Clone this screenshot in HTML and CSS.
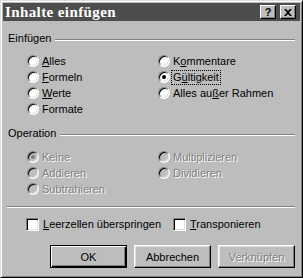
FILE: index.html
```
<!DOCTYPE html>
<html lang="de">
<head>
    <meta charset="UTF-8">
    <title>Inhalte einfügen</title>
    <link rel="stylesheet" href="styles.css">
</head>
<body>
    <div class="dialog">
        <div class="titlebar">
            <span class="title">Inhalte einfügen</span>
            <div class="caption-buttons">
                <span class="cap-btn help">?</span>
                <span class="cap-btn close">
                    <svg width="8" height="7" viewBox="0 0 8 7"><path d="M0 0h2l2 2 2-2h2L5 3.5 8 7H6L4 5 2 7H0l3-3.5z" fill="#000"/></svg>
                </span>
            </div>
        </div>

        <div class="content">
            <!-- Einfügen -->
            <div class="group-head"><span>Einfügen</span><div class="rule"></div></div>
            <div class="options">
                <label class="opt"><span class="radio"></span><span><u>A</u>lles</span></label>
                <label class="opt"><span class="radio"></span><span>K<u>o</u>mmentare</span></label>
                <label class="opt"><span class="radio"></span><span><u>F</u>ormeln</span></label>
                <label class="opt"><span class="radio checked"></span><span class="focus">G<u>ü</u>ltigkeit</span></label>
                <label class="opt"><span class="radio"></span><span><u>W</u>erte</span></label>
                <label class="opt"><span class="radio"></span><span>Alles au<u>ß</u>er Rahmen</span></label>
                <label class="opt"><span class="radio"></span><span>Formate</span></label>
            </div>

            <!-- Operation -->
            <div class="group-head op-head"><span>Operation</span><div class="rule"></div></div>
            <div class="options disabled">
                <label class="opt"><span class="radio checked"></span><span>Keine</span></label>
                <label class="opt"><span class="radio"></span><span>Multiplizieren</span></label>
                <label class="opt"><span class="radio"></span><span>Addieren</span></label>
                <label class="opt"><span class="radio"></span><span>Dividieren</span></label>
                <label class="opt"><span class="radio"></span><span>Subtrahieren</span></label>
            </div>

            <div class="separator"></div>

            <div class="checks">
                <label class="chk leer"><span class="box"></span><span><u>L</u>eerzellen überspringen</span></label>
                <label class="chk"><span class="box"></span><span><u>T</u>ransponieren</span></label>
            </div>

            <div class="buttons">
                <button class="btn default">OK</button>
                <button class="btn">Abbrechen</button>
                <button class="btn disabled-btn">Verknüpfen</button>
            </div>
        </div>
    </div>
</body>
</html>
```

FILE: styles.css
```
body {
    margin: 0;
    padding: 0;
    background: #bdbdbd;
    font-family: "Liberation Sans", Arial, sans-serif;
    font-size: 11px;
    line-height: 13px;
    color: #000;
}
.dialog {
    width: 303px;
    height: 278px;
    box-sizing: border-box;
    padding: 1px;
    background: #bdbdbd;
    border: 1px solid;
    border-color: #dfdfdf #000 #000 #dfdfdf;
    box-shadow: inset 1px 1px #fff, inset -1px -1px #808080;
}
.titlebar {
    height: 18px;
    margin: 1px 0 0 1px;
    width: 297px;
    background: #4d4d4d;
    display: flex;
    align-items: center;
    justify-content: space-between;
}
.title {
    font-family: "Liberation Serif", "Times New Roman", serif;
    font-weight: bold;
    font-size: 15px;
    color: #fff;
    padding-left: 2px;
    letter-spacing: 0.4px;
}
.caption-buttons {
    display: flex;
    gap: 4px;
    padding-right: 4px;
}
.cap-btn {
    width: 16px;
    height: 14px;
    box-sizing: border-box;
    background: #bdbdbd;
    border: 1px solid;
    border-color: #fff #000 #000 #fff;
    box-shadow: inset -1px -1px #808080;
    display: flex;
    align-items: center;
    justify-content: center;
}
.help {
    font-weight: bold;
    font-size: 11px;
    line-height: 12px;
}
.content {
    padding: 0 6px 0 6px;
}
.group-head {
    display: flex;
    gap: 4px;
    margin-top: 11px;
    height: 13px;
}
.group-head .rule {
    flex: 1;
    height: 0;
    margin-top: 7px;
    border-top: 1px solid #808080;
    border-bottom: 1px solid #fff;
}
.options {
    display: grid;
    grid-template-columns: 131px 1fr;
    padding-left: 19px;
    margin-top: 8px;
}
.opt, .chk {
    display: flex;
    align-items: center;
    gap: 3px;
    height: 16px;
}
.radio {
    width: 12px;
    height: 12px;
    box-sizing: border-box;
    border-radius: 50%;
    background: #fff;
    border: 1px solid;
    border-color: #808080 #fff #fff #808080;
    box-shadow: inset 1px 1px #000, inset -1px -1px #dfdfdf;
    position: relative;
}
.radio.checked::after {
    content: "";
    position: absolute;
    left: 3px;
    top: 3px;
    width: 4px;
    height: 4px;
    border-radius: 50%;
    background: #000;
}
.focus {
    outline: 1px dotted #000;
    outline-offset: 0;
    padding: 0 1px;
    margin-left: -1px;
}
.op-head {
    margin-top: 10px;
}
.options.disabled {
    margin-top: 9px;
    color: #808080;
    text-shadow: 1px 1px #fff;
}
.options.disabled .radio {
    background: #bdbdbd;
}
.options.disabled .radio.checked::after {
    background: #808080;
}
.separator {
    margin: 9px 0 0 -1px;
    border-top: 1px solid #808080;
    border-bottom: 1px solid #fff;
}
.checks {
    display: flex;
    margin-top: 8px;
    padding-left: 18px;
}
.chk {
    gap: 4px;
}
.chk.leer {
    width: 147px;
}
.box {
    width: 13px;
    height: 13px;
    box-sizing: border-box;
    background: #fff;
    border: 1px solid;
    border-color: #808080 #fff #fff #808080;
    box-shadow: inset 1px 1px #000, inset -1px -1px #dfdfdf;
}
.buttons {
    display: flex;
    justify-content: flex-end;
    gap: 7px;
    margin-top: 13px;
}
.btn {
    width: 77px;
    height: 23px;
    box-sizing: border-box;
    font-family: "Liberation Sans", Arial, sans-serif;
    font-size: 11px;
    background: #bdbdbd;
    color: #000;
    padding: 0;
    border: 1px solid;
    border-color: #fff #000 #000 #fff;
    box-shadow: inset -1px -1px #808080, inset 1px 1px #dfdfdf;
}
.btn.default {
    border: 1px solid #000;
    box-shadow: inset 1px 1px #fff, inset -1px -1px #000, inset -2px -2px #808080;
}
.disabled-btn {
    color: #808080;
    text-shadow: 1px 1px #fff;
}
```
